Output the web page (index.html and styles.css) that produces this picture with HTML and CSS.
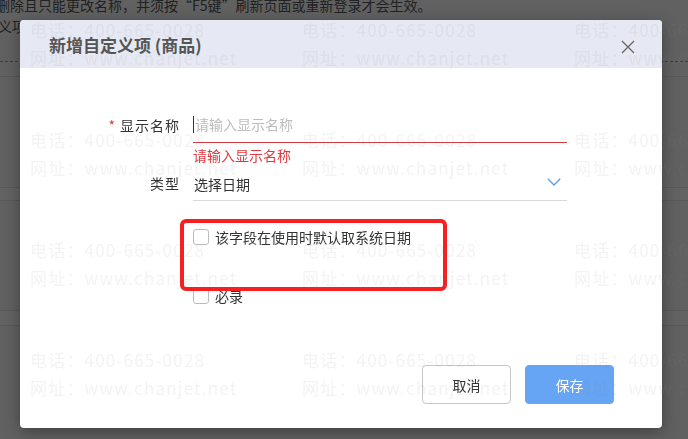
FILE: index.html
```html
<!DOCTYPE html>
<html lang="zh-CN">
<head>
<meta charset="utf-8">
<title>新增自定义项 (商品)</title>
<link rel="stylesheet" href="styles.css">
</head>
<body>
<div class="page">
  <div class="notice notice-1">删除且只能更改名称，并须按“F5键”刷新页面或重新登录才会生效。</div>
  <div class="notice notice-2">义项</div>
  <div class="grid">
    <div class="grid-row r1"></div>
    <div class="grid-row r2"></div>
    <div class="grid-row r3"></div>
    <div class="grid-row r4"></div>
    <div class="grid-row r5"></div>
  </div>
</div>
<div class="mask"></div>

<div class="modal">
  <div class="modal-header">
    <span class="modal-title">新增自定义项 (商品)</span>
    <button class="close-btn" aria-label="关闭">
      <svg width="14" height="14" viewBox="0 0 14 14"><path d="M1 1 L13 13 M13 1 L1 13" stroke="#666" stroke-width="1.3" fill="none"/></svg>
    </button>
  </div>
  <div class="modal-body">
    <div class="form-row">
      <label class="form-label"><span class="req">*</span>显示名称</label>
      <div class="field field-error"><span class="caret"></span><span class="placeholder">请输入显示名称</span></div>
    </div>
    <div class="form-error">请输入显示名称</div>
    <div class="form-row">
      <label class="form-label">类型</label>
      <div class="field field-select"><span class="value">选择日期</span>
        <svg class="chevron" width="14" height="8" viewBox="0 0 14 8"><path d="M0.8 0.8 L7 7 L13.2 0.8" stroke="#5b9be6" stroke-width="1.3" fill="none"/></svg>
      </div>
    </div>
    <div class="check-row check-first"><span class="checkbox"></span><span>该字段在使用时默认取系统日期</span></div>
    <div class="check-row check-second"><span class="checkbox"></span><span>必录</span></div>
    <div class="highlight"></div>
  </div>
  <div class="modal-footer">
    <button class="btn btn-cancel">取消</button>
    <button class="btn btn-save">保存</button>
  </div>
</div>

<div class="watermark">
  <div class="wm"><div>电话：400-665-0028</div><div>网址：www.chanjet.net</div></div>
  <div class="wm"><div>电话：400-665-0028</div><div>网址：www.chanjet.net</div></div>
  <div class="wm"><div>电话：400-665-0028</div><div>网址：www.chanjet.net</div></div>
  <div class="wm"><div>电话：400-665-0028</div><div>网址：www.chanjet.net</div></div>
  <div class="wm"><div>电话：400-665-0028</div><div>网址：www.chanjet.net</div></div>
  <div class="wm"><div>电话：400-665-0028</div><div>网址：www.chanjet.net</div></div>
  <div class="wm"><div>电话：400-665-0028</div><div>网址：www.chanjet.net</div></div>
  <div class="wm"><div>电话：400-665-0028</div><div>网址：www.chanjet.net</div></div>
  <div class="wm"><div>电话：400-665-0028</div><div>网址：www.chanjet.net</div></div>
  <div class="wm"><div>电话：400-665-0028</div><div>网址：www.chanjet.net</div></div>
  <div class="wm"><div>电话：400-665-0028</div><div>网址：www.chanjet.net</div></div>
  <div class="wm"><div>电话：400-665-0028</div><div>网址：www.chanjet.net</div></div>
</div>
</body>
</html>
```

FILE: styles.css
```css
* { box-sizing: border-box; }

html, body {
  margin: 0;
  padding: 0;
}

body {
  width: 688px;
  height: 439px;
  overflow: hidden;
  position: relative;
  background: #eff2f0;
  font-family: "Noto Sans CJK SC", "Noto Sans", sans-serif;
  color: #333;
}

/* background page */
.page {
  width: 688px;
}

.notice {
  font-size: 14px;
  line-height: 21px;
  color: #555;
  white-space: nowrap;
}

.notice-1 {
  margin-top: -5px;
  margin-left: -4px;
}

.notice-2 {
  margin-left: -2px;
}

.grid {
  margin-top: 24px;
  border-top: 1px dashed #999;
}

.grid-row {
  border-bottom: 1px solid #dadcdb;
}

.r1 { height: 15px; }
.r2 { height: 111px; }
.r3 { height: 13px; background: #f6f7f6; }
.r4 { height: 110px; }
.r5 { height: 15px; background: #f6f7f6; }

.mask {
  position: fixed;
  inset: 0;
  background: rgba(0, 0, 0, 0.6);
}

/* modal */
.modal {
  position: absolute;
  left: 20px;
  top: 20px;
  width: 642px;
  height: 408px;
  background: #fff;
  border-radius: 4px;
  box-shadow: 0 4px 16px rgba(0, 0, 0, 0.35);
  display: flex;
  flex-direction: column;
  overflow: hidden;
}

.modal-header {
  height: 48px;
  flex: none;
  background: #e6e9f3;
  display: flex;
  align-items: center;
  justify-content: space-between;
  padding: 0 25px 0 29px;
}

.modal-title {
  font-size: 17px;
  font-weight: bold;
  color: #555;
  line-height: 24px;
  padding-top: 2px;
}

.close-btn {
  width: 18px;
  height: 18px;
  padding: 0;
  margin-top: 6px;
  border: 0;
  background: transparent;
  display: flex;
  align-items: center;
  justify-content: center;
}

.modal-body {
  position: relative;
  flex: 1;
  padding-top: 42px;
}

.form-row {
  display: flex;
  align-items: center;
}

.form-label {
  width: 160px;
  text-align: right;
  font-size: 14px;
  letter-spacing: 1px;
  color: #333;
  line-height: 20px;
  margin-top: -4px;
}

.req {
  color: #e4393c;
  margin-right: 4px;
}

.field {
  margin-left: 13px;
  width: 374px;
  height: 33px;
  border-bottom: 1px solid #d9d9d9;
  display: flex;
  align-items: center;
  font-size: 14px;
  padding-left: 1px;
  padding-bottom: 4px;
}

.field-error {
  border-bottom-color: #d43a3f;
}

.caret {
  width: 1px;
  height: 17px;
  background: #333;
  margin-left: -1px;
  margin-right: 1px;
}

.placeholder {
  color: #bdbdbd;
}

.field-select {
  height: 32px;
  justify-content: space-between;
  padding-right: 6px;
  padding-bottom: 2px;
}

.value {
  color: #333;
}

.chevron {
  margin-top: -4px;
}

.form-error {
  padding-left: 173px;
  font-size: 14px;
  line-height: 24px;
  padding-bottom: 2px;
  color: #e0393e;
}

.check-row {
  display: flex;
  align-items: center;
  gap: 6px;
  padding-left: 173px;
  font-size: 14px;
  line-height: 20px;
  color: #333;
}

.check-first { margin-top: 26px; }
.check-second { margin-top: 39px; }

.checkbox {
  width: 16px;
  height: 16px;
  border: 1px solid #bcbcbc;
  border-radius: 3px;
  background: #fff;
  flex: none;
}

.highlight {
  position: absolute;
  left: 160px;
  top: 151px;
  width: 267px;
  height: 72px;
  border: 4.5px solid #f5201f;
  border-radius: 6px;
}

.modal-footer {
  flex: none;
  display: flex;
  justify-content: flex-end;
  gap: 14px;
  padding: 0 48px 24px 0;
}

.btn {
  width: 89px;
  height: 39px;
  border-radius: 4px;
  font-family: inherit;
  font-size: 14px;
  padding: 0;
}

.btn-cancel {
  background: #fff;
  border: 1px solid #c6c6c6;
  color: #333;
}

.btn-save {
  background: #66a4f4;
  border: 1px solid #66a4f4;
  color: #fff;
}

/* watermark */
.watermark {
  position: fixed;
  inset: 0;
  pointer-events: none;
  display: grid;
  grid-template-columns: repeat(3, 272px);
  grid-auto-rows: 110px;
  padding: 16px 0 0 30px;
  font-size: 17px;
  line-height: 28px;
  letter-spacing: 1.2px;
  color: rgba(142, 142, 142, 0.1);
  white-space: nowrap;
  overflow: hidden;
}
```
